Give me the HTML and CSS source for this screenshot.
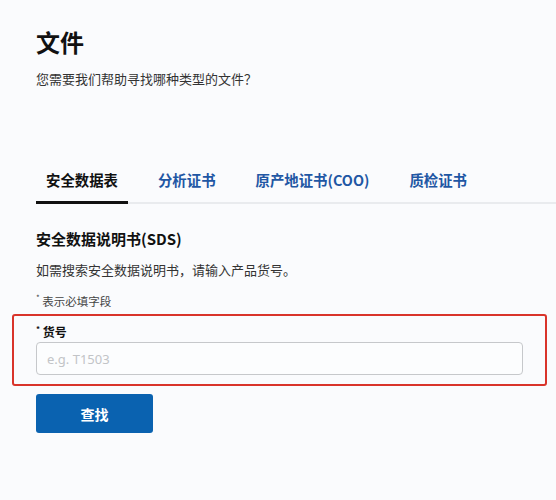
FILE: index.html
```html
<!DOCTYPE html>
<html lang="zh-CN">
<head>
<meta charset="utf-8">
<title>文件</title>
<link rel="stylesheet" href="styles.css">
</head>
<body>
<main class="page">
  <h1 class="title">文件</h1>
  <p class="subtitle">您需要我们帮助寻找哪种类型的文件？</p>

  <nav class="tabs">
    <a class="tab active">安全数据表</a>
    <a class="tab">分析证书</a>
    <a class="tab">原产地证书(COO)</a>
    <a class="tab">质检证书</a>
  </nav>

  <section class="panel">
    <h2 class="heading">安全数据说明书(SDS)</h2>
    <p class="desc">如需搜索安全数据说明书，请输入产品货号。</p>
    <p class="note"><span class="star">*</span> 表示必填字段</p>

    <div class="field-box">
      <label class="label"><span class="star">*</span> 货号</label>
      <input class="input" type="text" placeholder="e.g. T1503">
    </div>

    <button class="btn" type="button">查找</button>
  </section>
</main>
</body>
</html>
```

FILE: styles.css
```css
html, body {
  margin: 0;
  padding: 0;
  background: #fafbfd;
}
body {
  font-family: "Noto Sans CJK SC", "Noto Sans", sans-serif;
  color: #222;
  width: 556px;
  height: 500px;
  overflow: hidden;
}
.page {
  padding: 26px 0 0 36px;
}
.title {
  margin: 0;
  font-size: 24px;
  line-height: 32px;
  font-weight: 700;
  color: #111;
}
.subtitle {
  margin: 11px 0 0;
  font-size: 13px;
  line-height: 20px;
  color: #333;
}
.tabs {
  display: flex;
  gap: 20px;
  margin-top: 81px;
  border-bottom: 2px solid #e9ebee;
}
.tab {
  font-size: 14.4px;
  line-height: 20px;
  font-weight: 700;
  color: #1f57a4;
  padding: 0 10px 11px;
  border-bottom: 3px solid transparent;
  margin-bottom: -2px;
  cursor: pointer;
}
.tab.active {
  color: #111;
  border-bottom-color: #111;
}
.panel {
  width: 487px;
}
.heading {
  margin: 24px 0 0;
  font-size: 15px;
  line-height: 22px;
  font-weight: 700;
  color: #111;
}
.desc {
  margin: 10px 0 0;
  font-size: 13px;
  line-height: 20px;
  color: #333;
}
.note {
  margin: 12px 0 0;
  font-size: 11.5px;
  line-height: 18px;
  color: #444;
}
.star {
  font-size: 8px;
  vertical-align: top;
  line-height: 12px;
}
.field-box {
  margin: 4px -24px 0 -24px;
  padding: 7px 22px 9px;
  border: 2px solid #d9342b;
  border-radius: 3px;
}
.label {
  display: block;
  font-size: 12px;
  line-height: 18px;
  font-weight: 700;
  color: #111;
}
.input {
  display: block;
  box-sizing: border-box;
  width: 100%;
  height: 33px;
  margin-top: 1px;
  padding: 0 10px;
  border: 1px solid #c6c8cb;
  border-radius: 4px;
  background: #fcfdfe;
  font-family: "Noto Sans", sans-serif;
  font-size: 13px;
  color: #333;
  outline: none;
}
.input::placeholder {
  color: #c2c4c7;
}
.btn {
  display: block;
  margin-top: 8px;
  width: 117px;
  height: 39px;
  border: none;
  border-radius: 3px;
  background: #0a62b0;
  color: #fff;
  font-family: "Noto Sans CJK SC", sans-serif;
  font-size: 14px;
  font-weight: 700;
  cursor: pointer;
}
```
